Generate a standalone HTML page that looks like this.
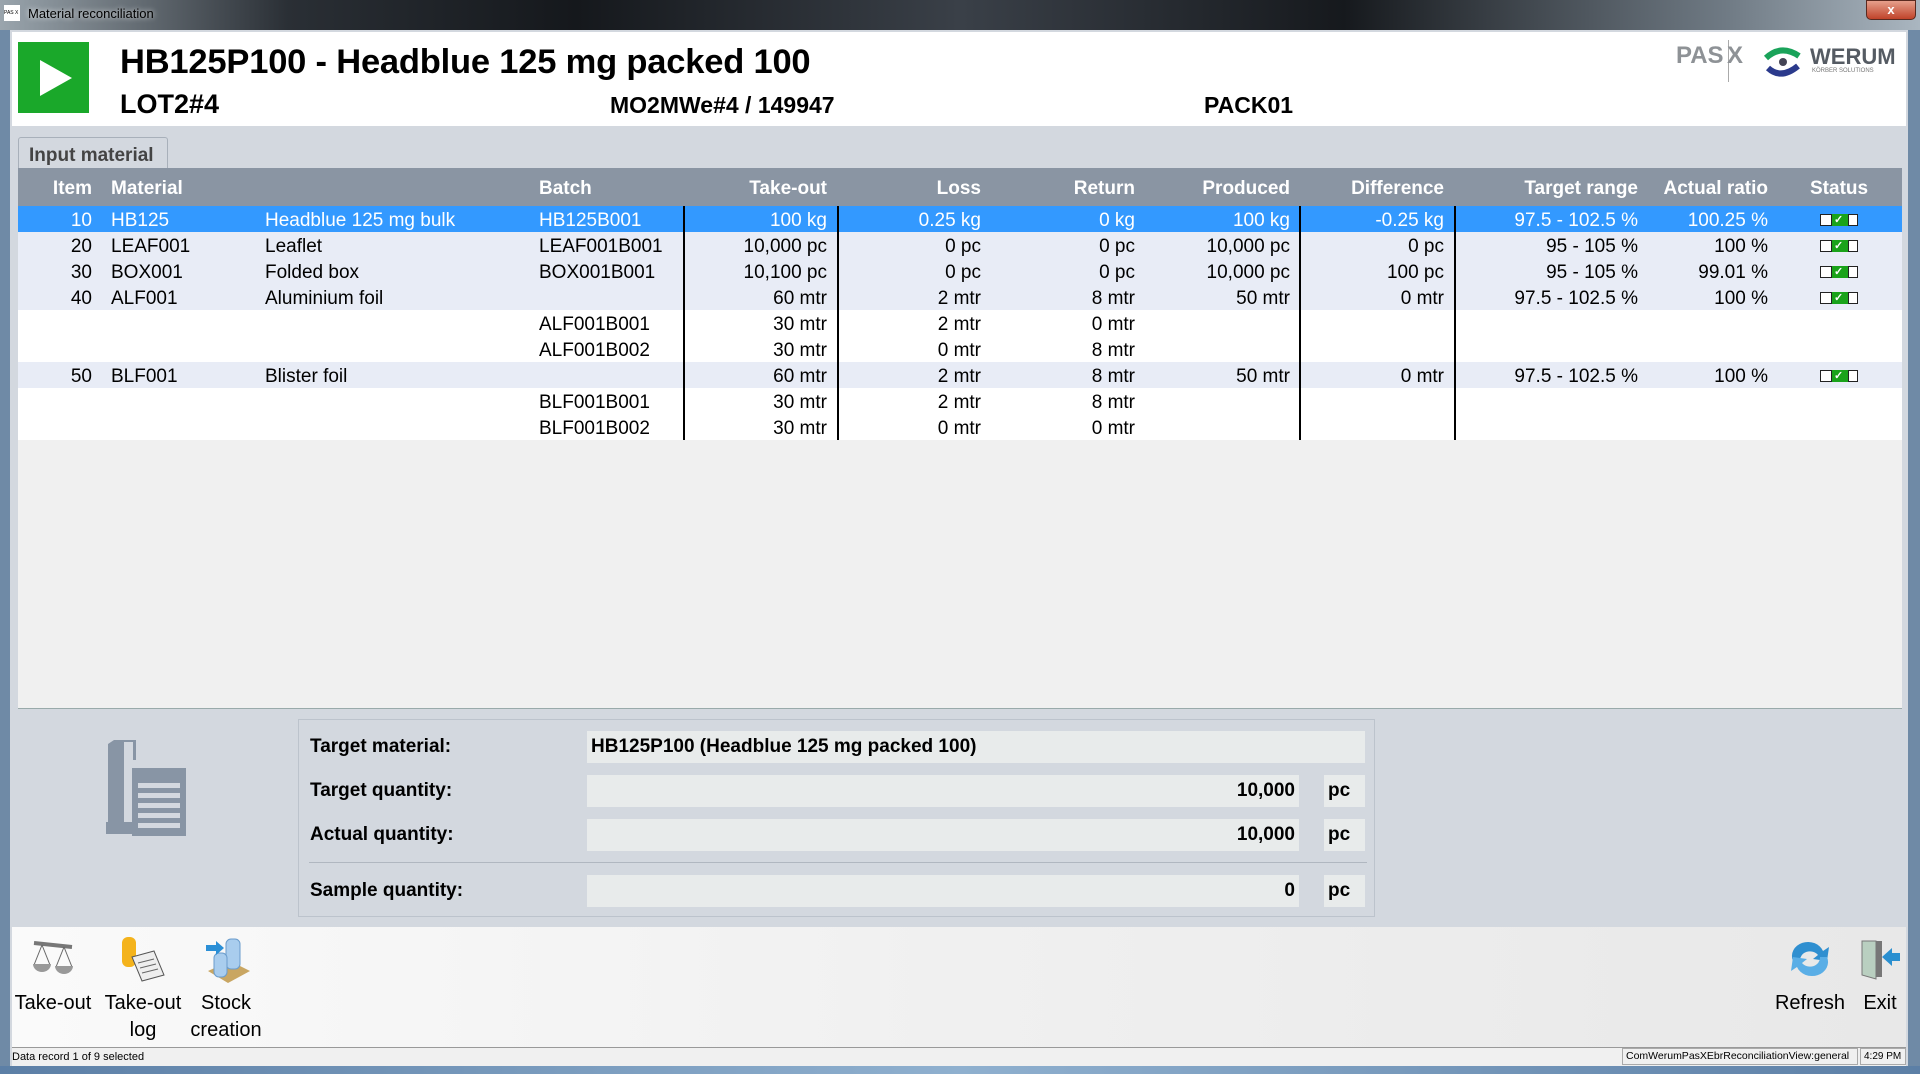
<!DOCTYPE html>
<html><head><meta charset="utf-8"><style>
*{margin:0;padding:0;box-sizing:border-box}
body{width:1920px;height:1074px;overflow:hidden;font-family:"Liberation Sans",Arial,sans-serif;background:#6f8aa6;position:relative}
.a{position:absolute}
.b{font-weight:bold}
.r{text-align:right}
.row{position:absolute;left:18px;width:1884px;height:26px;font-size:19px;line-height:26px;color:#000}
.row span{position:absolute;top:2px;white-space:nowrap}
.hd span{position:absolute;top:2px;white-space:nowrap}
.st{position:absolute;left:1802px;top:8px;width:38px;height:12px;border:1px solid #222;background:#fff}
.st:before{content:"";position:absolute;left:10px;top:-1px;width:16px;height:12px;background:#1aa31a;border-left:1px solid #222;border-right:1px solid #222}
.st:after{content:"✓";position:absolute;left:13px;top:-8px;font-size:11px;color:#fff;font-weight:bold}
.vl{position:absolute;top:206px;height:234px;width:2px;background:#000}
.lbl{position:absolute;left:310px;font-size:19px;font-weight:bold}
.fld{position:absolute;height:32px;background:#e8ebeb;font-size:19px;font-weight:bold;line-height:32px;padding:0 4px}
.tb{position:absolute;font-size:20px;text-align:center;line-height:27px;color:#000}
</style></head><body>
<div class="a" style="left:0;top:0;width:1920px;height:30px;background:linear-gradient(90deg,#9aa5ad 0%,#2a2f35 15%,#15181c 30%,#3a4048 50%,#16191d 70%,#707b85 90%,#aab6c0 100%)"></div>
<div class="a" style="left:4px;top:5px;width:16px;height:16px;background:#fff;font-size:5px;line-height:16px">PAS X</div>
<div class="a" style="left:28px;top:6px;font-size:13px;color:#000;text-shadow:0 0 6px #fff">Material reconciliation</div>
<div class="a" style="left:1866px;top:0;width:50px;height:20px;background:linear-gradient(#e6a08c,#c0432a);border:1px solid #5a2a20;border-radius:0 0 5px 5px;color:#fff;font-weight:bold;text-align:center;font-size:13px;line-height:18px">x</div>
<div class="a" style="left:10px;top:30px;width:1898px;height:1037px;background:#d3d8df"></div>
<div class="a" style="left:12px;top:32px;width:1894px;height:94px;background:#fff"></div>
<div class="a" style="left:18px;top:42px;width:71px;height:71px;background:#1aa82a"></div>
<svg class="a" style="left:38px;top:58px" width="36" height="40"><polygon points="2,2 34,20 2,38" fill="#fff"/></svg>
<div class="a b" style="left:120px;top:43px;font-size:34.5px;letter-spacing:-0.2px">HB125P100 - Headblue 125 mg packed 100</div>
<div class="a b" style="left:120px;top:89px;font-size:27px">LOT2#4</div>
<div class="a b" style="left:610px;top:92px;font-size:23px">MO2MWe#4 / 149947</div>
<div class="a b" style="left:1204px;top:92px;font-size:23px">PACK01</div>
<div class="a" style="left:1676px;top:42px;font-size:24px;color:#8e9296;font-weight:bold">PAS</div>
<div class="a" style="left:1728px;top:40px;width:1px;height:42px;background:#aaa"></div>
<div class="a" style="left:1727px;top:42px;font-size:24px;color:#8e9296;font-weight:bold">X</div>
<svg class="a" style="left:1763px;top:46px" width="40" height="32"><path d="M3 12 Q18 -2 36 10" stroke="#1aa35a" stroke-width="6" fill="none"/><path d="M5 22 Q18 34 35 20" stroke="#2b3a8c" stroke-width="6" fill="none"/><circle cx="20" cy="16" r="4" fill="#445"/></svg>
<div class="a b" style="left:1810px;top:44px;font-size:22px;color:#555b63">WERUM</div>
<div class="a" style="left:1812px;top:68px;font-size:6px;color:#777">KÖRBER SOLUTIONS</div>
<div class="a" style="left:18px;top:137px;width:150px;height:33px;background:#d3d8df;border:1px solid #a8b0ba;border-bottom:none;border-radius:3px 3px 0 0;font-size:19px;color:#444;font-weight:bold;padding:7px 0 0 10px">Input material</div>
<div class="a" style="left:18px;top:168px;width:1884px;height:541px;background:#f0f0f0;border-bottom:1px solid #9aa"></div>
<div class="row hd b" style="top:168px;height:38px;line-height:38px;background:#8a95a3;color:#fff">
<span style="right:1810px">Item</span><span style="left:93px">Material</span><span style="left:521px">Batch</span>
<span style="right:1075px">Take-out</span><span style="right:921px">Loss</span><span style="right:767px">Return</span><span style="right:612px">Produced</span><span style="right:458px">Difference</span><span style="right:264px">Target range</span><span style="right:134px">Actual ratio</span><span style="left:1792px">Status</span></div>
<div class="row" style="top:206px;background:#3399ff;color:#fff"><span style="right:1810px">10</span><span style="left:93px">HB125</span><span style="left:247px">Headblue 125 mg bulk</span><span style="left:521px">HB125B001</span><span style="right:1075px">100 kg</span><span style="right:921px">0.25 kg</span><span style="right:767px">0 kg</span><span style="right:612px">100 kg</span><span style="right:458px">-0.25 kg</span><span style="right:264px">97.5 - 102.5 %</span><span style="right:134px">100.25 %</span><div class="st"></div></div>
<div class="row" style="top:232px;background:#e8ecf6"><span style="right:1810px">20</span><span style="left:93px">LEAF001</span><span style="left:247px">Leaflet</span><span style="left:521px">LEAF001B001</span><span style="right:1075px">10,000 pc</span><span style="right:921px">0 pc</span><span style="right:767px">0 pc</span><span style="right:612px">10,000 pc</span><span style="right:458px">0 pc</span><span style="right:264px">95 - 105 %</span><span style="right:134px">100 %</span><div class="st"></div></div>
<div class="row" style="top:258px;background:#e8ecf6"><span style="right:1810px">30</span><span style="left:93px">BOX001</span><span style="left:247px">Folded box</span><span style="left:521px">BOX001B001</span><span style="right:1075px">10,100 pc</span><span style="right:921px">0 pc</span><span style="right:767px">0 pc</span><span style="right:612px">10,000 pc</span><span style="right:458px">100 pc</span><span style="right:264px">95 - 105 %</span><span style="right:134px">99.01 %</span><div class="st"></div></div>
<div class="row" style="top:284px;background:#e8ecf6"><span style="right:1810px">40</span><span style="left:93px">ALF001</span><span style="left:247px">Aluminium foil</span><span style="right:1075px">60 mtr</span><span style="right:921px">2 mtr</span><span style="right:767px">8 mtr</span><span style="right:612px">50 mtr</span><span style="right:458px">0 mtr</span><span style="right:264px">97.5 - 102.5 %</span><span style="right:134px">100 %</span><div class="st"></div></div>
<div class="row" style="top:310px;background:#fff"><span style="left:521px">ALF001B001</span><span style="right:1075px">30 mtr</span><span style="right:921px">2 mtr</span><span style="right:767px">0 mtr</span></div>
<div class="row" style="top:336px;background:#fff"><span style="left:521px">ALF001B002</span><span style="right:1075px">30 mtr</span><span style="right:921px">0 mtr</span><span style="right:767px">8 mtr</span></div>
<div class="row" style="top:362px;background:#e8ecf6"><span style="right:1810px">50</span><span style="left:93px">BLF001</span><span style="left:247px">Blister foil</span><span style="right:1075px">60 mtr</span><span style="right:921px">2 mtr</span><span style="right:767px">8 mtr</span><span style="right:612px">50 mtr</span><span style="right:458px">0 mtr</span><span style="right:264px">97.5 - 102.5 %</span><span style="right:134px">100 %</span><div class="st"></div></div>
<div class="row" style="top:388px;background:#fff"><span style="left:521px">BLF001B001</span><span style="right:1075px">30 mtr</span><span style="right:921px">2 mtr</span><span style="right:767px">8 mtr</span></div>
<div class="row" style="top:414px;background:#fff"><span style="left:521px">BLF001B002</span><span style="right:1075px">30 mtr</span><span style="right:921px">0 mtr</span><span style="right:767px">0 mtr</span></div>
<div class="vl" style="left:683px"></div><div class="vl" style="left:837px"></div><div class="vl" style="left:1299px"></div><div class="vl" style="left:1454px"></div>
<svg class="a" style="left:106px;top:738px" width="104" height="104"><path d="M8 2 h22 v20 h-12 v68 h-16 v-84z" fill="#8895a5"/><rect x="18" y="4" width="9" height="18" fill="#d3d8df"/><rect x="26" y="30" width="54" height="68" fill="#8895a5"/><g fill="#d3d8df"><rect x="32" y="45" width="42" height="5"/><rect x="32" y="55" width="42" height="5"/><rect x="32" y="65" width="42" height="5"/><rect x="32" y="75" width="42" height="5"/><rect x="32" y="85" width="42" height="5"/></g><rect x="0" y="84" width="26" height="12" fill="#8895a5"/></svg>
<div class="a" style="left:298px;top:719px;width:1077px;height:198px;border:1px solid #bcc3cc"></div>
<div class="lbl" style="top:736px">Target material:</div>
<div class="lbl" style="top:780px">Target quantity:</div>
<div class="lbl" style="top:824px">Actual quantity:</div>
<div class="lbl" style="top:880px">Sample quantity:</div>
<div class="a" style="left:309px;top:862px;width:1058px;height:1px;background:#b0b7c0"></div>
<div class="fld" style="left:587px;top:731px;width:778px">HB125P100 (Headblue 125 mg packed 100)</div>
<div class="fld r" style="left:587px;top:775px;width:712px">10,000</div><div class="fld" style="left:1324px;top:775px;width:41px">pc</div>
<div class="fld r" style="left:587px;top:819px;width:712px">10,000</div><div class="fld" style="left:1324px;top:819px;width:41px">pc</div>
<div class="fld r" style="left:587px;top:875px;width:712px">0</div><div class="fld" style="left:1324px;top:875px;width:41px">pc</div>
<div class="a" style="left:12px;top:927px;width:1894px;height:120px;background:linear-gradient(90deg,#fafafa,#f0f0f0 50%,#e8e8e8)"></div>
<svg class="a" style="left:30px;top:937px" width="48" height="40"><line x1="4" y1="6" x2="42" y2="10" stroke="#777" stroke-width="4"/><line x1="12" y1="8" x2="4" y2="28" stroke="#666"/><line x1="12" y1="8" x2="20" y2="28" stroke="#666"/><line x1="34" y1="10" x2="26" y2="30" stroke="#666"/><line x1="34" y1="10" x2="42" y2="30" stroke="#666"/><path d="M3 27 h18 a9 8 0 0 1 -18 0z" fill="#999"/><path d="M25 29 h18 a9 8 0 0 1 -18 0z" fill="#999"/></svg>
<svg class="a" style="left:118px;top:935px" width="50" height="48"><rect x="4" y="2" width="14" height="30" rx="6" fill="#f4b31c"/><path d="M14 22 l22 -6 l10 24 l-22 6z" fill="#eee" stroke="#555"/><g stroke="#666"><line x1="20" y1="28" x2="36" y2="24"/><line x1="22" y1="33" x2="38" y2="29"/><line x1="24" y1="38" x2="40" y2="34"/></g></svg>
<svg class="a" style="left:204px;top:935px" width="50" height="50"><path d="M4 36 l20 12 l22 -12 l-20 -10z" fill="#c9a662"/><rect x="22" y="4" width="14" height="30" rx="5" fill="#a9cdee" stroke="#6a9ccc"/><rect x="10" y="18" width="13" height="24" rx="5" fill="#a9cdee" stroke="#6a9ccc"/><path d="M2 10 h10 v-4 l8 7 l-8 7 v-4 h-10z" fill="#2b8fd6"/></svg>
<div class="tb" style="left:8px;top:990px;width:90px">Take-out</div>
<div class="tb" style="left:98px;top:990px;width:90px">Take-out<br>log</div>
<div class="tb" style="left:181px;top:990px;width:90px">Stock<br>creation</div>
<svg class="a" style="left:1787px;top:939px" width="46" height="40"><path d="M6 22 a16 14 0 0 1 30 -10 l6 -4 l-2 14 l-14 -2 l5 -4 a10 9 0 0 0 -18 6z" fill="#2f8fd0"/><path d="M40 18 a16 14 0 0 1 -30 10 l-6 4 l2 -14 l14 2 l-5 4 a10 9 0 0 0 18 -6z" fill="#5aaee6"/></svg>
<svg class="a" style="left:1858px;top:937px" width="44" height="46"><path d="M4 4 h14 v38 l-14 -4z" fill="#b9cfc0" stroke="#777"/><rect x="18" y="4" width="6" height="36" fill="#777"/><path d="M24 20 l10 -9 v5 h8 v8 h-8 v5z" fill="#2a8fd0"/></svg>
<div class="tb" style="left:1760px;top:990px;width:100px">Refresh</div>
<div class="tb" style="left:1850px;top:990px;width:60px">Exit</div>
<div class="a" style="left:12px;top:1047px;width:1894px;height:19px;background:#f0f0f0;border-top:1px solid #999;font-size:11px;line-height:18px">Data record 1 of 9 selected</div>
<div class="a" style="left:1622px;top:1048px;width:236px;height:17px;border:1px solid #aaa;font-size:10.5px;line-height:15px;padding-left:3px;white-space:nowrap;overflow:hidden">ComWerumPasXEbrReconciliationView:general</div>
<div class="a" style="left:1860px;top:1048px;width:46px;height:17px;border:1px solid #aaa;font-size:10px;line-height:15px;padding-left:3px;white-space:nowrap">4:29 PM</div>
<div class="a" style="left:0;top:1066px;width:1920px;height:8px;background:linear-gradient(90deg,#5c7fa6,#8fb0cf,#5c7fa6)"></div>
</body></html>
